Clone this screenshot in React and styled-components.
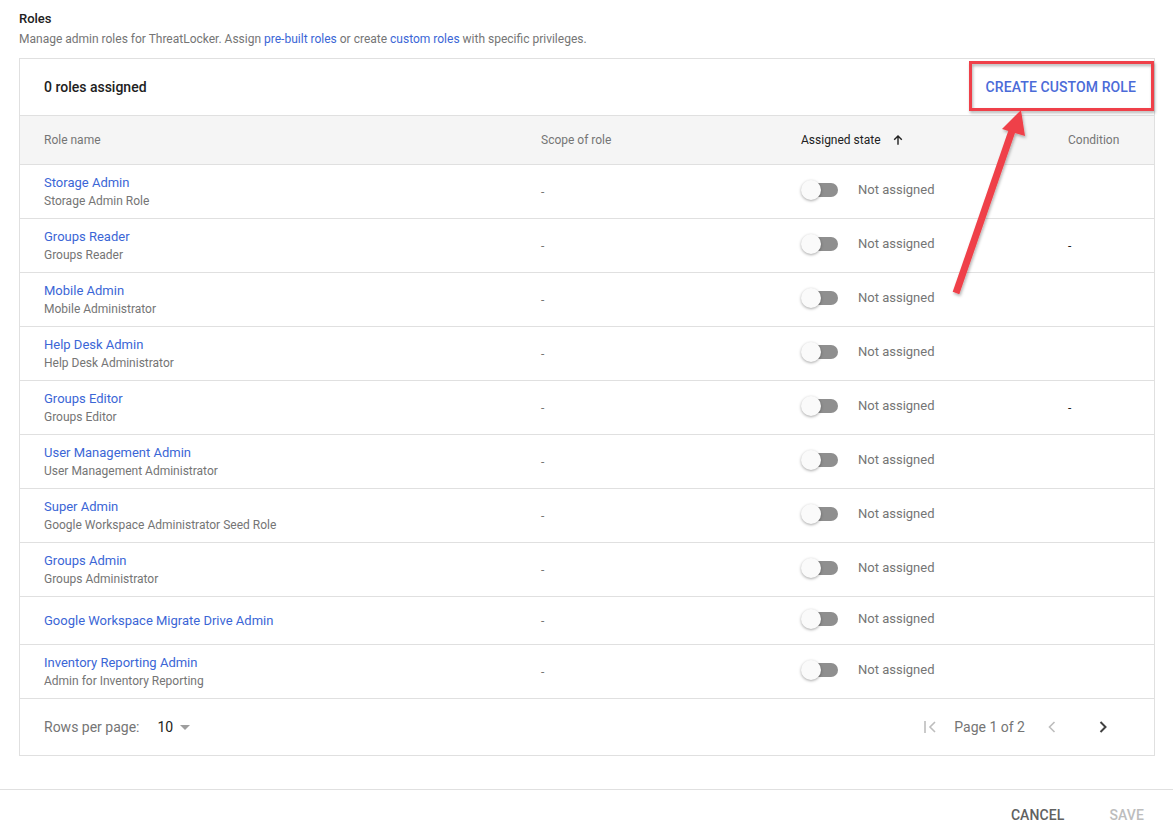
import React from 'react';
import styled, { createGlobalStyle } from 'styled-components';

const GlobalStyle = createGlobalStyle`
  body {
    margin: 0;
    font-family: Roboto, "Liberation Sans", Arial, sans-serif;
    color: #212121;
    background: #fff;
  }
`;

const Page = styled.div`
  position: relative;
  width: 1173px;
  min-height: 839px;
`;

const Section = styled.div`
  padding: 9px 18px 0 19px;
`;

const Title = styled.h2`
  margin: 0;
  font-size: 13px;
  font-weight: 500;
  line-height: 20px;
`;

const Description = styled.p`
  margin: 1px 0 0;
  font-size: 12px;
  line-height: 18px;
  color: #757575;

  a {
    color: #3b66d6;
    text-decoration: none;
  }
`;

const Card = styled.div`
  margin-top: 10px;
  border: 1px solid #e0e0e0;
`;

const CardHeader = styled.div`
  display: flex;
  align-items: center;
  justify-content: space-between;
  height: 56px;
  padding: 0 18px 0 24px;
`;

const Count = styled.div`
  font-size: 14px;
  font-weight: 500;
`;

const TextButton = styled.button`
  border: none;
  background: none;
  padding: 0;
  font-family: inherit;
  font-size: 14px;
  font-weight: 500;
  letter-spacing: 0.1px;
  text-transform: uppercase;
  color: ${(p) => p.color || '#4b6bd8'};
  cursor: pointer;
`;

const Grid = styled.div`
  display: grid;
  grid-template-columns: 521px 260px 267px 1fr;
  align-items: center;
  border-top: 1px solid #e0e0e0;
`;

const HeadRow = styled(Grid)`
  height: 48px;
  background: #f5f5f5;
`;

const Row = styled(Grid)`
  height: ${(p) => (p.single ? 47 : 53)}px;
`;

const HeadCell = styled.div`
  display: flex;
  align-items: center;
  gap: 10px;
  font-size: 12px;
  color: ${(p) => (p.active ? '#212121' : '#757575')};
  padding-left: ${(p) => (p.first ? 24 : 0)}px;
`;

const NameCell = styled.div`
  padding-left: 24px;
  display: flex;
  flex-direction: column;
`;

const RoleName = styled.a`
  font-size: 13px;
  line-height: 18px;
  color: #3b66d6;
  text-decoration: none;
`;

const RoleDesc = styled.span`
  font-size: 12px;
  line-height: 18px;
  color: #757575;
`;

const Dash = styled.div`
  font-size: 12px;
  color: ${(p) => (p.dark ? '#212121' : '#757575')};
`;

const StateCell = styled.div`
  display: flex;
  align-items: center;
  gap: 20px;
  margin-top: -4px;
`;

const Toggle = styled.span`
  position: relative;
  display: inline-block;
  width: 37px;
  height: 20px;

  &::before {
    content: '';
    position: absolute;
    left: 2px;
    right: 0;
    top: 3px;
    height: 14px;
    border-radius: 7px;
    background: #8f8f8f;
  }

  &::after {
    content: '';
    position: absolute;
    left: 0;
    top: 0;
    width: 20px;
    height: 20px;
    border-radius: 50%;
    background: #fafafa;
    box-shadow: 0 1px 3px rgba(0, 0, 0, 0.35);
  }
`;

const StateText = styled.span`
  font-size: 13px;
  color: #757575;
`;

const Footer = styled.div`
  display: flex;
  align-items: center;
  justify-content: space-between;
  height: 56px;
  border-top: 1px solid #e0e0e0;
  padding: 0 43px 0 24px;
`;

const RowsPer = styled.div`
  display: flex;
  align-items: center;
  font-size: 14px;
  color: #757575;

  b {
    font-weight: 400;
    color: #212121;
    margin-left: 18px;
  }
`;

const Caret = styled.span`
  width: 0;
  height: 0;
  margin-left: 7px;
  border-left: 5px solid transparent;
  border-right: 5px solid transparent;
  border-top: 5px solid #9e9e9e;
`;

const Pager = styled.div`
  display: flex;
  align-items: center;
  font-size: 14px;
  color: #757575;
`;

const PageLabel = styled.span`
  margin: 0 19px 0 15px;
`;

const Icon = styled.svg`
  display: block;
  margin-right: ${(p) => p.mr || 0}px;
`;

const Actions = styled.div`
  margin-top: 33px;
  border-top: 1px solid #e0e0e0;
  height: 50px;
  display: flex;
  align-items: center;
  justify-content: flex-end;
  gap: 45px;
  padding: 0 29px 0 0;
`;

const Overlay = styled.svg`
  position: absolute;
  left: 0;
  top: 0;
  pointer-events: none;
`;

const roles = [
  ['Storage Admin', 'Storage Admin Role', false],
  ['Groups Reader', 'Groups Reader', true],
  ['Mobile Admin', 'Mobile Administrator', false],
  ['Help Desk Admin', 'Help Desk Administrator', false],
  ['Groups Editor', 'Groups Editor', true],
  ['User Management Admin', 'User Management Administrator', false],
  ['Super Admin', 'Google Workspace Administrator Seed Role', false],
  ['Groups Admin', 'Groups Administrator', false],
  ['Google Workspace Migrate Drive Admin', '', false],
  ['Inventory Reporting Admin', 'Admin for Inventory Reporting', false],
];

export default function App() {
  return (
    <Page>
      <GlobalStyle />
      <Section>
        <Title>Roles</Title>
        <Description>
          Manage admin roles for ThreatLocker. Assign <a href="#">pre-built roles</a> or create{' '}
          <a href="#">custom roles</a> with specific privileges.
        </Description>
        <Card>
          <CardHeader>
            <Count>0 roles assigned</Count>
            <TextButton>Create custom role</TextButton>
          </CardHeader>
          <HeadRow>
            <HeadCell first>Role name</HeadCell>
            <HeadCell>Scope of role</HeadCell>
            <HeadCell active>
              Assigned state
              <Icon width="14" height="14" viewBox="0 0 24 24">
                <path d="M12 20V5M5.5 11.5 12 5l6.5 6.5" fill="none" stroke="#212121" strokeWidth="2.4" />
              </Icon>
            </HeadCell>
            <HeadCell>Condition</HeadCell>
          </HeadRow>
          {roles.map(([name, desc, cond]) => (
            <Row key={name} single={!desc}>
              <NameCell>
                <RoleName href="#">{name}</RoleName>
                {desc && <RoleDesc>{desc}</RoleDesc>}
              </NameCell>
              <Dash>-</Dash>
              <StateCell>
                <Toggle />
                <StateText>Not assigned</StateText>
              </StateCell>
              <Dash dark>{cond ? '-' : ''}</Dash>
            </Row>
          ))}
          <Footer>
            <RowsPer>
              Rows per page: <b>10</b>
              <Caret />
            </RowsPer>
            <Pager>
              <Icon width="16" height="16" viewBox="0 0 16 16">
                <path d="M2 2v12" stroke="#bdbdbd" strokeWidth="1.6" />
                <path d="M12 3 7 8l5 5" fill="none" stroke="#bdbdbd" strokeWidth="1.6" />
              </Icon>
              <PageLabel>Page 1 of 2</PageLabel>
              <Icon width="16" height="16" viewBox="0 0 16 16" mr="35">
                <path d="M10.5 3 5.5 8l5 5" fill="none" stroke="#bdbdbd" strokeWidth="1.6" />
              </Icon>
              <Icon width="16" height="16" viewBox="0 0 16 16">
                <path d="M5.5 3l5 5-5 5" fill="none" stroke="#424242" strokeWidth="2" />
              </Icon>
            </Pager>
          </Footer>
        </Card>
      </Section>
      <Actions>
        <TextButton color="#616161">Cancel</TextButton>
        <TextButton color="#bdbdbd">Save</TextButton>
      </Actions>
      <Overlay width="1173" height="839">
        <defs>
          <filter id="shadow" x="-20%" y="-20%" width="140%" height="140%">
            <feDropShadow dx="1" dy="2" stdDeviation="1.5" floodColor="#000" floodOpacity="0.3" />
          </filter>
        </defs>
        <g filter="url(#shadow)">
          <rect x="970.5" y="62.5" width="182" height="47" fill="none" stroke="#ef4048" strokeWidth="3" />
          <line x1="956" y1="293" x2="1013" y2="128" stroke="#ef4048" strokeWidth="7" />
          <polygon points="1021,110 1002,129 1025,136" fill="#ef4048" />
        </g>
      </Overlay>
    </Page>
  );
}
